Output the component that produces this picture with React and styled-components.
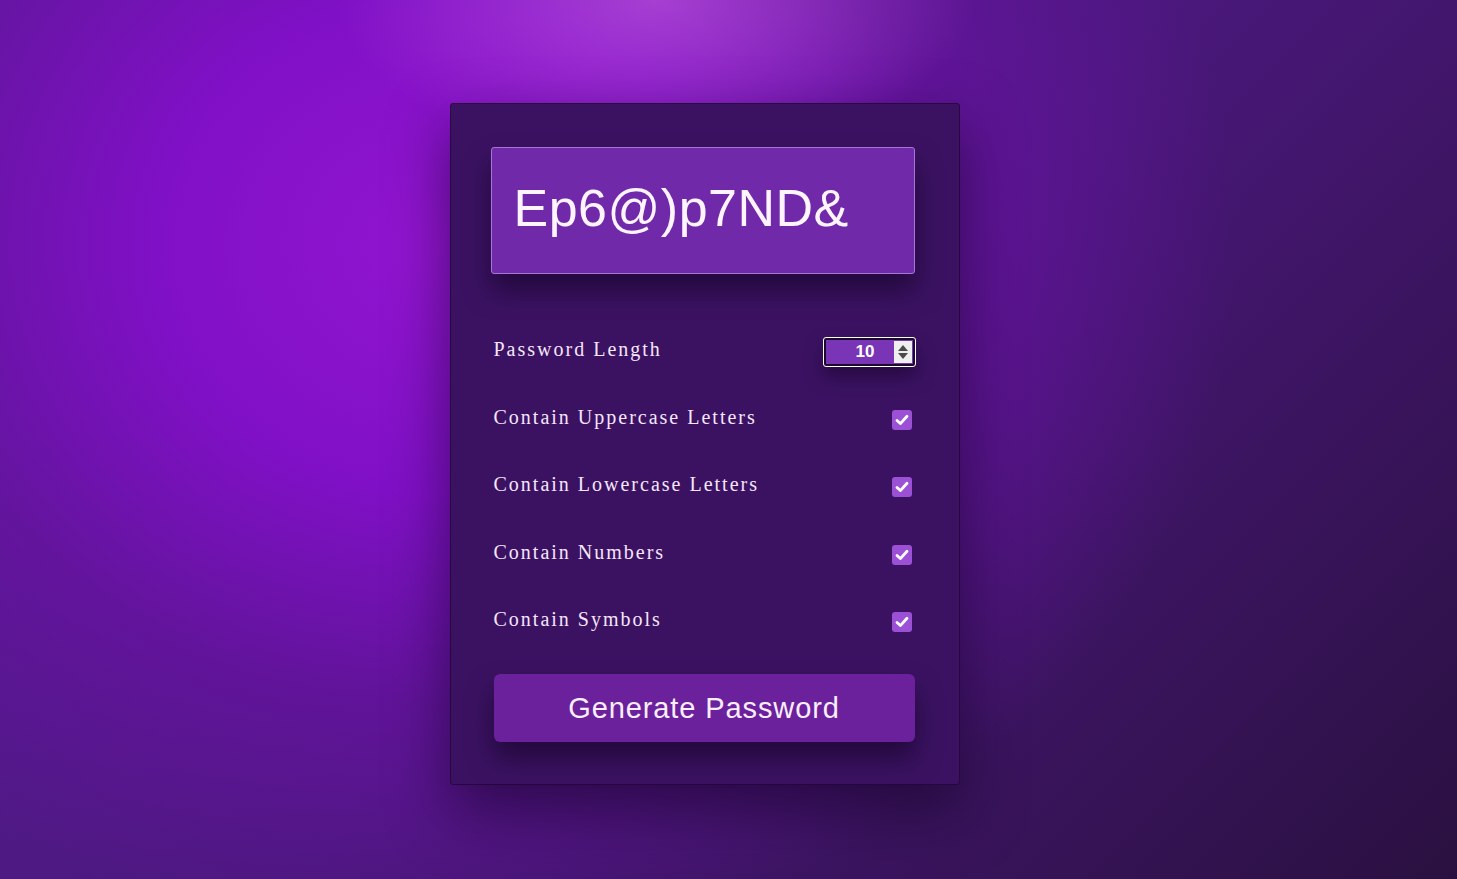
import styled, { createGlobalStyle } from "styled-components";

const GlobalStyle = createGlobalStyle`
  html, body {
    margin: 0;
    min-height: 100%;
  }
  body {
    background:
      radial-gradient(ellipse 22% 18% at 45% 0%, rgba(205, 100, 230, 0.55), rgba(205, 100, 230, 0) 100%),
      radial-gradient(ellipse 55% 80% at 30% 28%, #9215d0 0%, #8010c6 35%, rgba(110, 16, 170, 0.6) 65%, rgba(60, 16, 100, 0) 100%),
      linear-gradient(135deg, #5a1c98 0%, #4a187c 50%, #2a1040 100%);
    background-attachment: fixed;
    font-family: "Liberation Sans", Arial, sans-serif;
  }
`;

const Page = styled.div`
  min-height: 100vh;
  display: flex;
  align-items: center;
  justify-content: center;
  padding: 9px 48px 0 0;
  box-sizing: border-box;
`;

const Panel = styled.div`
  width: 510px;
  box-sizing: border-box;
  padding: 43px 44px 42px 40px;
  background: #3b1262;
  border: 1px solid #26083f;
  border-radius: 3px;
  box-shadow: 0 25px 60px rgba(15, 0, 30, 0.55);
  display: flex;
  flex-direction: column;
`;

const Display = styled.div`
  height: 127px;
  box-sizing: border-box;
  display: flex;
  align-items: center;
  padding: 0 22px 4px;
  background: #7029a8;
  border: 1px solid #a676d6;
  border-radius: 3px;
  box-shadow: 0 16px 26px rgba(15, 0, 30, 0.55);
  color: #fff4ff;
  font-family: "Liberation Sans", Arial, sans-serif;
  font-size: 52px;
  letter-spacing: 0.5px;
`;

const Options = styled.div`
  margin-top: 43px;
  display: flex;
  flex-direction: column;
`;

const Row = styled.label`
  height: 67.5px;
  display: flex;
  align-items: center;
  justify-content: space-between;
  padding: 0 2px 0 3px;
`;

const Label = styled.span`
  font-family: "Liberation Serif", "Times New Roman", serif;
  font-size: 20px;
  letter-spacing: 2px;
  color: #f5e6fb;
  padding-bottom: 2px;
`;

const NumberBox = styled.div`
  width: 91px;
  height: 28px;
  box-sizing: border-box;
  display: flex;
  align-items: center;
  justify-content: flex-end;
  gap: 19px;
  padding-right: 1px;
  background: #7a35b6;
  border: 2px solid #1c0a2c;
  border-radius: 2px;
  outline: 1px solid #ffffff;
  box-shadow: 0 10px 18px rgba(15, 0, 30, 0.5);
  margin: 2px -2px 0 0;
`;

const NumberValue = styled.span`
  font-family: "Liberation Sans", Arial, sans-serif;
  font-weight: 700;
  font-size: 17px;
  color: #ffffff;
`;

const Spinner = styled.span`
  width: 18px;
  height: 22px;
  background: #efefef;
  display: flex;
  align-items: center;
  justify-content: center;
`;

const CheckBox = styled.span`
  width: 20px;
  height: 20px;
  border-radius: 3px;
  background: #9b50d6;
  display: flex;
  align-items: center;
  justify-content: center;
  margin: 3px 1px 0 0;
`;

const GenerateButton = styled.button`
  margin: 20px 0 0 3px;
  height: 68px;
  border: none;
  border-radius: 6px;
  background: #6b219b;
  color: #fbeefe;
  font-family: "Liberation Sans", Arial, sans-serif;
  font-size: 29px;
  letter-spacing: 0.9px;
  box-shadow: 0 16px 26px rgba(15, 0, 30, 0.55);
  cursor: pointer;
`;

const options = [
  "Contain Uppercase Letters",
  "Contain Lowercase Letters",
  "Contain Numbers",
  "Contain Symbols",
];

function Check() {
  return (
    <svg width="16" height="16" viewBox="0 0 16 16">
      <path
        d="M3 8.4 L6.4 11.6 L13 4.2"
        fill="none"
        stroke="#ffffff"
        strokeWidth="2.8"
        strokeLinecap="round"
        strokeLinejoin="round"
      />
    </svg>
  );
}

function Arrows() {
  return (
    <svg width="12" height="18" viewBox="0 0 12 18">
      <path d="M6 2 L11 8 H1 Z" fill="#4a4a4a" />
      <path d="M6 16 L11 10 H1 Z" fill="#4a4a4a" />
    </svg>
  );
}

export default function App() {
  return (
    <>
      <GlobalStyle />
      <Page>
        <Panel>
          <Display>Ep6@)p7ND&amp;</Display>
          <Options>
            <Row>
              <Label>Password Length</Label>
              <NumberBox>
                <NumberValue>10</NumberValue>
                <Spinner>
                  <Arrows />
                </Spinner>
              </NumberBox>
            </Row>
            {options.map((o) => (
              <Row key={o}>
                <Label>{o}</Label>
                <CheckBox>
                  <Check />
                </CheckBox>
              </Row>
            ))}
          </Options>
          <GenerateButton>Generate Password</GenerateButton>
        </Panel>
      </Page>
    </>
  );
}
